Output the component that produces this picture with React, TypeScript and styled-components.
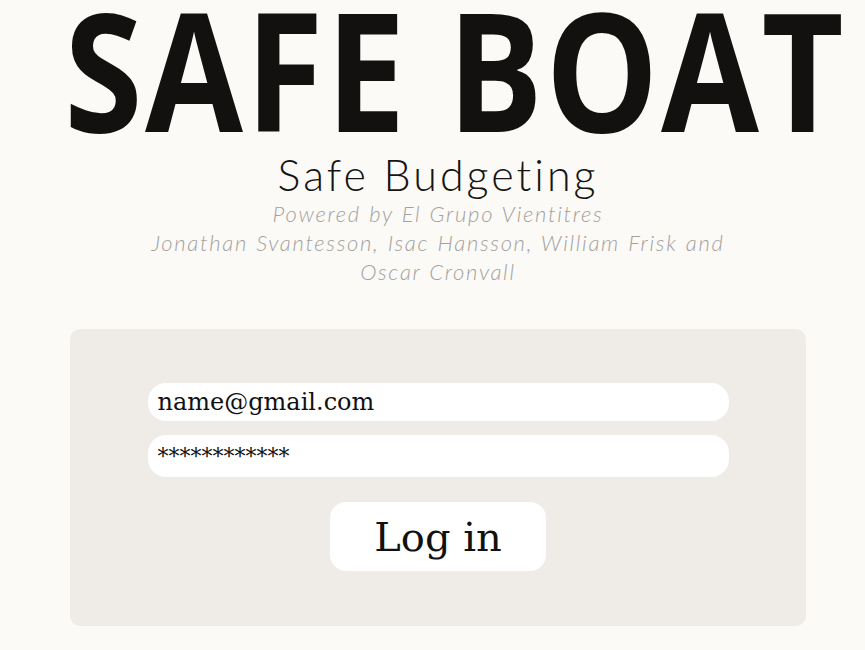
import React from 'react'
import styled, { createGlobalStyle } from 'styled-components'

const GlobalStyle = createGlobalStyle`
    html, body {
        margin: 0;
        padding: 0;
        background: #fbfaf7;
        overflow: hidden;
    }
`

const App = () => {
    return (
        <>
            <GlobalStyle />
            <Page>
                <Header>
                    <Title>SAFE BOAT</Title>
                    <Subtitle>Safe Budgeting</Subtitle>
                    <Credits>
                        Powered by El Grupo Vientitres
                        <br />
                        Jonathan Svantesson, Isac Hansson, William Frisk and Oscar Cronvall
                    </Credits>
                </Header>
                <Panel>
                    <Field type="text" defaultValue="name@gmail.com" readOnly />
                    <Field type="text" defaultValue="************" readOnly small />
                    <LoginButton>Log in</LoginButton>
                </Panel>
            </Page>
        </>
    )
}
export default App

const Page = styled.div`
    width: 876px;
    display: flex;
    flex-direction: column;
    align-items: center;
`
const Header = styled.div`
    display: flex;
    flex-direction: column;
    align-items: center;
    width: 100%;
`
const Title = styled.h1`
    margin: -7px 0 8px 34px;
    font-family: 'Open Sans', sans-serif;
    font-weight: 700;
    font-size: 166px;
    line-height: 150px;
    letter-spacing: 3px;
    color: #121110;
    white-space: nowrap;
    transform: scaleX(0.855);
`
const Subtitle = styled.h2`
    margin: 0;
    font-family: Lato, sans-serif;
    font-weight: 300;
    font-size: 43px;
    line-height: 48px;
    letter-spacing: 3px;
    color: #151413;
`
const Credits = styled.p`
    margin: 0;
    max-width: 600px;
    text-align: center;
    font-family: Lato, sans-serif;
    font-weight: 300;
    font-style: italic;
    font-size: 22px;
    line-height: 29px;
    letter-spacing: 1.7px;
    word-spacing: 1px;
    color: #a3a19e;
`
const Panel = styled.div`
    margin-top: 43px;
    width: 736px;
    box-sizing: border-box;
    padding: 54px 78px 55px;
    background: #efece8;
    border-radius: 10px;
    display: flex;
    flex-direction: column;
    align-items: center;
`
const Field = styled.input<{ small?: boolean }>`
    width: 581px;
    height: ${(p) => (p.small ? '42px' : '38px')};
    margin-bottom: ${(p) => (p.small ? '25px' : '14px')};
    box-sizing: border-box;
    border: none;
    outline: none;
    border-radius: 18px;
    background: #ffffff;
    padding: 0 10px;
    font-family: 'DejaVu Serif', serif;
    font-size: ${(p) => (p.small ? '22px' : '24px')};
    color: #111;
`
const LoginButton = styled.button`
    width: 216px;
    height: 69px;
    border: none;
    border-radius: 16px;
    background: #ffffff;
    font-family: 'DejaVu Serif', serif;
    font-size: 40px;
    color: #111;
    cursor: pointer;
`
